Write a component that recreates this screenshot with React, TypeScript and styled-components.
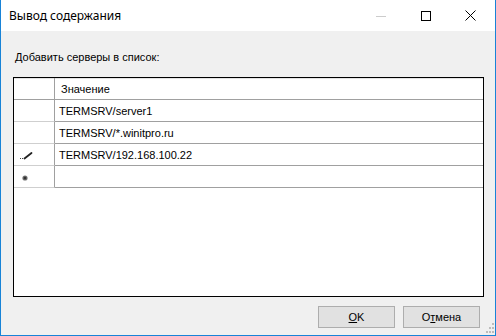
import styled, { createGlobalStyle } from "styled-components";

const GlobalStyle = createGlobalStyle`
  html, body { margin: 0; padding: 0; background: #fff; }
  body { font-family: "Liberation Sans", Arial, sans-serif; }
`;

const Window = styled.div`
  position: relative;
  width: 496px;
  height: 336px;
  box-sizing: border-box;
  border: 1px solid #1883d7;
  border-top: none;
  display: flex;
  flex-direction: column;
  background: #f0f0f0;
  overflow: hidden;
`;

const TitleBar = styled.div`
  flex: none;
  height: 31px;
  background: #fff;
  display: flex;
  align-items: center;
  padding-right: 2px;
`;

const Title = styled.div`
  flex: 1;
  padding-left: 8px;
  padding-bottom: 1px;
  font-family: "Noto Sans", "Open Sans", sans-serif;
  font-size: 12px;
  color: #000;
`;

const CaptionButton = styled.div`
  width: 45px;
  height: 31px;
  display: flex;
  align-items: center;
  justify-content: center;
`;

const Body = styled.div`
  flex: 1;
  display: flex;
  flex-direction: column;
  padding: 20px 11px 7px 12px;
`;

const Label = styled.div`
  margin: 0 0 13px 2px;
  font-size: 11px;
  line-height: 13px;
  color: #000;
`;

const Grid = styled.div`
  height: 220px;
  box-sizing: border-box;
  border: 1px solid #000;
  background: #fff;
  display: flex;
  flex-direction: column;
`;

const Row = styled.div<{ $header?: boolean }>`
  display: flex;
  height: 22px;
  box-shadow: ${(p) => (p.$header ? "inset 0 1px #e3e3e3" : "none")};
`;

const RowHead = styled.div<{ $pad?: number; $header?: boolean }>`
  width: 41px;
  box-sizing: border-box;
  border-right: 1px solid #a0a0a0;
  border-bottom: 1px solid ${(p) => (p.$header ? "#a0a0a0" : "#cfcfcf")};
  display: flex;
  align-items: center;
  padding-left: ${(p) => p.$pad ?? 0}px;
`;

const Cell = styled.div<{ $header?: boolean }>`
  flex: 1;
  box-sizing: border-box;
  border-bottom: 1px solid #a0a0a0;
  display: flex;
  align-items: center;
  padding-left: ${(p) => (p.$header ? 6 : 4)}px;
  font-size: 11px;
  color: #000;
  white-space: nowrap;
`;

const Footer = styled.div`
  display: flex;
  justify-content: flex-end;
  gap: 8px;
  margin-top: 9px;
  padding-right: 4px;
`;

const Button = styled.div`
  width: 77px;
  height: 22px;
  box-sizing: border-box;
  border: 1px solid #adadad;
  background: #e1e1e1;
  display: flex;
  align-items: center;
  justify-content: center;
  font-size: 11px;
  color: #000;
  u { text-underline-offset: 1px; }
`;

const Grip = styled.svg`
  position: absolute;
  right: 1px;
  bottom: 2px;
`;

const Pencil = () => (
  <svg width="13" height="8" viewBox="0 0 13 8" style={{ marginTop: 3 }}>
    <rect x="0" y="6" width="1" height="1" fill="#444" />
    <rect x="2" y="6" width="1" height="1" fill="#444" />
    <path d="M4.5 6.5 L11.5 1" stroke="#222" strokeWidth="1.8" strokeLinecap="round" />
  </svg>
);

const Star = () => (
  <svg width="6" height="6" viewBox="0 0 6 6" style={{ marginTop: 2 }}>
    <circle cx="3" cy="3" r="2.6" fill="#777" />
    <circle cx="3" cy="3" r="1.5" fill="#333" />
  </svg>
);

const rows: { text: string; icon?: "edit" | "new" }[] = [
  { text: "TERMSRV/server1" },
  { text: "TERMSRV/*.winitpro.ru" },
  { text: "TERMSRV/192.168.100.22", icon: "edit" },
  { text: "", icon: "new" },
];

export default function App() {
  return (
    <>
      <GlobalStyle />
      <Window>
        <TitleBar>
          <Title>Вывод содержания</Title>
          <CaptionButton>
            <svg width="10" height="10" viewBox="0 0 10 10">
              <rect x="0" y="5" width="10" height="1" fill="#cccccc" />
            </svg>
          </CaptionButton>
          <CaptionButton>
            <svg width="10" height="10" viewBox="0 0 10 10">
              <rect x="0.5" y="0.5" width="9" height="9" fill="none" stroke="#000" />
            </svg>
          </CaptionButton>
          <CaptionButton>
            <svg width="11" height="11" viewBox="0 0 11 11">
              <path d="M0.5 0.5 L10.5 10.5 M10.5 0.5 L0.5 10.5" stroke="#000" strokeWidth="1" />
            </svg>
          </CaptionButton>
        </TitleBar>
        <Body>
          <Label>Добавить серверы в список:</Label>
          <Grid>
            <Row $header>
              <RowHead $header />
              <Cell $header>Значение</Cell>
            </Row>
            {rows.map((r, i) => (
              <Row key={i}>
                <RowHead $pad={r.icon === "edit" ? 6 : 8}>
                  {r.icon === "edit" && <Pencil />}
                  {r.icon === "new" && <Star />}
                </RowHead>
                <Cell>{r.text}</Cell>
              </Row>
            ))}
          </Grid>
          <Footer>
            <Button>
              <span>
                <u>O</u>K
              </span>
            </Button>
            <Button>
              <span>
                О<u>т</u>мена
              </span>
            </Button>
          </Footer>
        </Body>
        <Grip width="8" height="10" viewBox="0 0 8 10">
          <rect x="6" y="0" width="2" height="2" fill="#bcbcbc" />
          <rect x="3" y="4" width="2" height="2" fill="#bcbcbc" />
          <rect x="6" y="4" width="2" height="2" fill="#bcbcbc" />
          <rect x="0" y="8" width="2" height="2" fill="#bcbcbc" />
          <rect x="3" y="8" width="2" height="2" fill="#bcbcbc" />
          <rect x="6" y="8" width="2" height="2" fill="#bcbcbc" />
        </Grip>
      </Window>
    </>
  );
}
